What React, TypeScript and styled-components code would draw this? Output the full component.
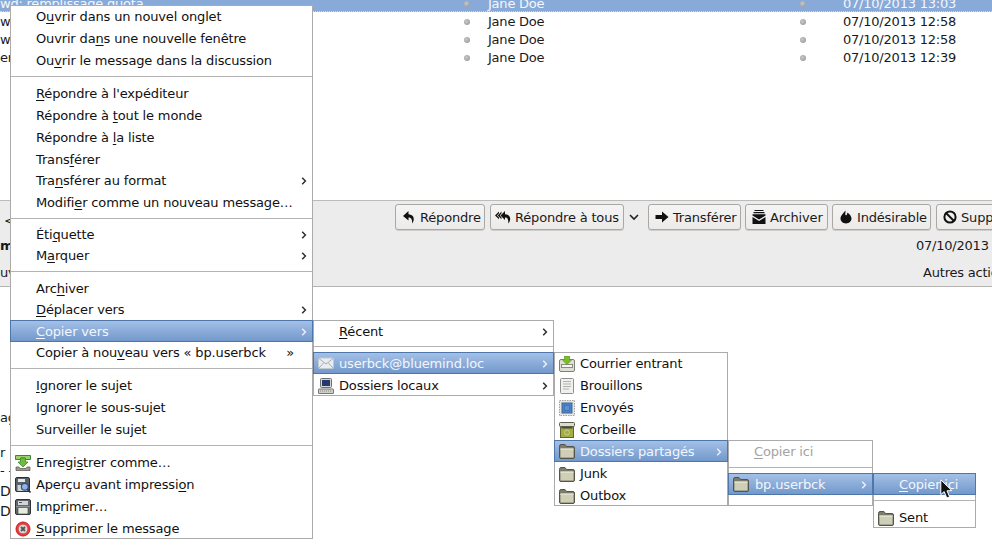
import React from "react";
import styled, { createGlobalStyle, css } from "styled-components";

const Global = createGlobalStyle`
  html, body { margin: 0; padding: 0; background: #fff; }
  body { font-family: "DejaVu Sans", sans-serif; font-size: 13px; color: #1a1a1a; letter-spacing: -0.22px; }
`;

const Page = styled.div`
  position: relative;
  width: 992px;
  height: 547px;
  overflow: hidden;
  background: #fff;
`;

const List = styled.div`
  margin-top: -6px;
  height: 206px;
  display: flex;
  flex-direction: column;
`;

const ListRow = styled.div<{ $selected?: boolean }>`
  box-sizing: border-box;
  height: 18px;
  padding-top: 2px;
  display: grid;
  grid-template-columns: 464px 6px 18px 312px 6px 37px 1fr;
  align-items: center;
  line-height: 16px;
  white-space: nowrap;
  ${(p) =>
    p.$selected
      ? css`
          background: #88aad9;
          color: #f4f7fc;
          border-bottom: 1px dotted #e8d88a;
        `
      : ""}
`;

const Dot = styled.span`
  width: 6px;
  height: 6px;
  border-radius: 50%;
  background: radial-gradient(circle at 40% 40%, #c9c9c9, #8f8f8f);
`;

const Header = styled.div`
  height: 85px;
  background: #edecec;
  border-top: 1px solid #bcbbb9;
  border-bottom: 1px solid #b5b4b2;
  overflow: hidden;
`;

const Toolbar = styled.div`
  display: flex;
  align-items: center;
  height: 26px;
  margin-top: 3px;
  padding-left: 3px;
`;

const Back = styled.span`
  box-sizing: border-box;
  flex: none;
  align-self: flex-start;
  width: 392px;
  padding-left: 1px;
  line-height: 34px;
`;

const ToolButton = styled.button<{ $w: number; $ml?: number }>`
  width: ${(p) => p.$w}px;
  margin-left: ${(p) => p.$ml ?? 5}px;
  height: 26px;
  flex: none;
  padding: 0 0 0 6px;
  display: flex;
  align-items: center;
  gap: 4px;
  font: 13px "DejaVu Sans", sans-serif;
  letter-spacing: -0.18px;
  color: #1a1a1a;
  white-space: nowrap;
  overflow: hidden;
  border: 1px solid #a9a8a5;
  border-radius: 3px;
  background: linear-gradient(#f5f4f4, #ecebea);
  box-shadow: 0 1px 0 #cfcecc;
`;

const DropChevron = styled.svg`
  width: 14px;
  height: 26px;
  margin-left: 3px;
  flex: none;
`;

const HeaderLine = styled.div<{ $h: number }>`
  display: flex;
  justify-content: space-between;
  height: ${(p) => p.$h}px;
  align-items: center;
  white-space: nowrap;
`;

const SideText = styled.span<{ $bold?: boolean }>`
  font-weight: ${(p) => (p.$bold ? 700 : 400)};
`;

const DateText = styled.span`
  margin-right: -37px;
`;

const MoreText = styled.span`
  margin-right: -21px;
`;

const Body = styled.div`
  padding-top: 122px;
  width: 11px;
  overflow: hidden;
  display: flex;
  flex-direction: column;
  align-items: flex-start;
`;

const BodyLine = styled.div<{ $h: number; $size?: number }>`
  height: ${(p) => p.$h}px;
  line-height: ${(p) => p.$h}px;
  font-size: ${(p) => p.$size ?? 13}px;
  white-space: nowrap;
`;

const Menu = styled.div<{ $left: number; $top: number; $width: number }>`
  position: absolute;
  left: ${(p) => p.$left}px;
  top: ${(p) => p.$top}px;
  width: ${(p) => p.$width}px;
  box-sizing: border-box;
  background: #fff;
  border: 1px solid #ababab;
  color: #111;
  letter-spacing: -0.15px;
`;

const ItemIcon = styled.svg`
  position: absolute;
  left: 4px;
  top: 3px;
  width: 16px;
  height: 16px;
`;

const Chevron = styled.svg<{ $light?: boolean }>`
  position: absolute;
  right: 5px;
  top: 7px;
  width: 6px;
  height: 8px;
  fill: none;
  stroke: ${(p) => (p.$light ? "#e8effa" : "#2e2e2e")};
  stroke-width: 1.5;
`;

const Item = styled.div<{ $active?: boolean; $disabled?: boolean; $pad?: number; $h?: number }>`
  box-sizing: border-box;
  height: ${(p) => p.$h ?? 22}px;
  position: relative;
  padding-top: 3px;
  padding-left: ${(p) => p.$pad ?? 25}px;
  line-height: 15px;
  white-space: nowrap;
  color: ${(p) => (p.$disabled ? "#a3a3a3" : "#111")};
  u { text-underline-offset: 2px; text-decoration-thickness: 1px; }
  ${(p) =>
    p.$active
      ? css`
          height: 22px;
          margin: -1px -1px ${(p.$h ?? 22) - 21}px;
          padding-top: 4px;
          padding-left: ${(p.$pad ?? 25) + 1}px;
          color: #f2f6fc;
          background: linear-gradient(#a6c2e8, #7096ca);
          box-shadow: inset 0 0 0 1px #4f76ab;
          ${ItemIcon} { left: 5px; }
          ${Chevron} { right: 6px; top: 8px; }
        `
      : ""}
`;

const Quote = styled.span`
  position: absolute;
  right: 18px;
`;

const Separator = styled.div<{ $h?: number; $top?: number }>`
  box-sizing: border-box;
  height: ${(p) => p.$h ?? 11}px;
  padding-top: ${(p) => p.$top ?? 4}px;
  &::before {
    content: "";
    display: block;
    height: 1px;
    background: #b4b4b4;
  }
`;

const Cursor = styled.svg`
  position: absolute;
  left: 940px;
  top: 479px;
  width: 14px;
  height: 21px;
`;

const Arrow = ({ light }: { light?: boolean }) => (
  <Chevron $light={light} viewBox="0 0 6 8">
    <path d="M1.2 0.8 L4.4 4 L1.2 7.2" />
  </Chevron>
);

const Folder = () => (
  <ItemIcon viewBox="0 0 16 16">
    <path d="M0.5 3.5 Q0.5 1.5 2 1.5 H6 L7.5 3.5 H14 Q15.5 3.5 15.5 5 V14 Q15.5 15.5 14 15.5 H2 Q0.5 15.5 0.5 14 Z" fill="#7d7c68" stroke="#55544a" />
    <path d="M1.5 5.5 H14.5 V14.5 H1.5 Z" fill="#cfcfb8" />
    <path d="M1.5 5.5 H14.5 V7 H1.5 Z" fill="#e0e0cf" />
  </ItemIcon>
);

const MailIcon = () => (
  <ItemIcon viewBox="0 0 16 16">
    <rect x="0.5" y="3" width="15" height="10.5" rx="1" fill="#e9edf2" stroke="#c2c8d0" />
    <path d="M1 3.5 L8 9 L15 3.5 M1 13 L6 7.5 M15 13 L10 7.5" fill="none" stroke="#a9aeb6" />
  </ItemIcon>
);

const ComputerIcon = () => (
  <ItemIcon viewBox="0 0 16 16">
    <rect x="2.5" y="0.5" width="11" height="9" rx="1" fill="#d6d6d2" stroke="#6e6e6a" />
    <rect x="4" y="2" width="8" height="6" fill="#24386f" />
    <rect x="0.5" y="11" width="15" height="4.5" rx="0.5" fill="#cfcfcb" stroke="#77776f" />
    <path d="M2 13 H14" stroke="#8b8b85" strokeDasharray="1 1" />
  </ItemIcon>
);

const InboxIcon = () => (
  <ItemIcon viewBox="0 0 16 16">
    <rect x="0.5" y="3.5" width="15" height="12" rx="1.5" fill="#dfdfd6" stroke="#7f7f76" />
    <rect x="2.5" y="8.5" width="11" height="3" fill="#f7f7f2" stroke="#8a8a80" />
    <path d="M5.5 0 H10.5 V3.5 H13 L8 8.5 L3 3.5 H5.5 Z" fill="#7dbb2e" stroke="#5a9618" strokeWidth="0.7" />
  </ItemIcon>
);

const DraftIcon = () => (
  <ItemIcon viewBox="0 0 16 16">
    <rect x="1.5" y="0.5" width="13" height="15" rx="1" fill="#f0f0ee" stroke="#8f8f8b" />
    <path d="M4 3.5 H12 M4 6 H12 M4 8.5 H12 M4 11 H10" stroke="#b1b1ac" />
  </ItemIcon>
);

const SentIcon = () => (
  <ItemIcon viewBox="0 0 16 16">
    <rect x="0.5" y="0.5" width="15" height="15" fill="#e6e6e2" stroke="#a3a39c" strokeDasharray="1.5 1" />
    <rect x="3" y="3" width="10" height="10" fill="#4d82c6" stroke="#3a669f" />
    <rect x="5.5" y="5.5" width="5" height="5" fill="#5f90cf" stroke="#4674b0" />
  </ItemIcon>
);

const TrashIcon = () => (
  <ItemIcon viewBox="0 0 16 16">
    <rect x="1.5" y="4" width="13" height="11.5" fill="#a3ad46" stroke="#60642f" />
    <rect x="0.5" y="0.5" width="15" height="4" rx="1" fill="#dcdccf" stroke="#5c5c50" />
    <rect x="2.5" y="5" width="11" height="1.5" fill="#4b4b40" />
    <circle cx="8" cy="10.5" r="2.5" fill="none" stroke="#c8d083" />
  </ItemIcon>
);

const SaveIcon = () => (
  <ItemIcon viewBox="0 0 16 16">
    <path d="M0.5 0.5 H15.5 V4.5 H10 V3 H6 V4.5 H0.5 Z" fill="#9ed06c" stroke="#2f8a3a" />
    <path d="M5.5 3 H10.5 V7 H13 L8 12 L3 7 H5.5 Z" fill="#6fbb3a" stroke="#3d8a2e" strokeWidth="0.8" />
    <path d="M1 12 H4 L5 13.5 H11 L12 12 H15 V15.5 H1 Z" fill="#9a9a90" stroke="#55554c" strokeWidth="0.7" />
  </ItemIcon>
);

const PreviewIcon = () => (
  <ItemIcon viewBox="0 0 16 16">
    <rect x="0.5" y="0.5" width="14" height="14" rx="1.5" fill="#5a6168" stroke="#2c3136" />
    <rect x="3" y="2" width="7" height="3" fill="#e5e6e8" />
    <rect x="2.5" y="8" width="10" height="6" fill="#cfd3d6" />
    <circle cx="9.8" cy="9.8" r="3.4" fill="#8fb5e0" stroke="#2d4f86" strokeWidth="1.2" />
    <path d="M12.5 12.5 L15.5 15.5" stroke="#2c3136" strokeWidth="1.6" />
  </ItemIcon>
);

const PrintIcon = () => (
  <ItemIcon viewBox="0 0 16 16">
    <rect x="0.5" y="0.5" width="15" height="15" rx="1.5" fill="#62676c" stroke="#2f3337" />
    <rect x="3" y="2" width="10" height="4" fill="#d2d4d6" />
    <rect x="4" y="3" width="3" height="1" fill="#555" />
    <rect x="3" y="8.5" width="10" height="6.5" fill="#e7ecdc" stroke="#4a4e50" strokeWidth="0.7" />
    <rect x="1" y="7" width="14" height="1.2" fill="#8d9296" />
  </ItemIcon>
);

const DeleteIcon = () => (
  <ItemIcon viewBox="0 0 16 16">
    <circle cx="8" cy="8" r="7" fill="#ef3b3b" stroke="#c92020" />
    <circle cx="8" cy="8" r="4.8" fill="#d9d9d9" stroke="#b22" strokeWidth="0.5" />
    <path d="M6 6 L10 10 M10 6 L6 10" stroke="#555" strokeWidth="1.8" />
  </ItemIcon>
);

const ToolSvg = styled.svg`
  width: 14px;
  height: 14px;
  flex: none;
  fill: #111;
`;

const WideToolSvg = styled(ToolSvg)`
  width: 17px;
  margin: 0 -1px 0 -2px;
`;

const OutlineToolSvg = styled(ToolSvg)`
  fill: none;
  stroke: #111;
  stroke-width: 2;
`;

const ReplyGlyph = () => (
  <ToolSvg viewBox="0 0 14 14">
    <path d="M6.5 1 L1 6 L6.5 10.5 V7.6 C9 7.6 10.2 8.8 10.2 13.5 C12.5 10.5 13 4.6 6.5 4.2 Z" />
  </ToolSvg>
);

const ReplyAllGlyph = () => (
  <WideToolSvg viewBox="0 0 17 14">
    <path d="M4 1.5 L0 5.5 L4 9.2 V7.6 L2 5.5 L4 3.2 Z" />
    <path d="M6.5 1.5 L2.8 5.5 L6.5 9.2 V7.6 L4.8 5.5 L6.5 3.2 Z" />
    <path d="M10 1 L5.5 5.5 L10 10 V7.6 C12.5 7.6 13.4 9.2 13.4 13.5 C16 10.5 16.5 4.6 10 4.2 Z" />
  </WideToolSvg>
);

const ForwardGlyph = () => (
  <ToolSvg viewBox="0 0 14 14">
    <path d="M0.5 5 H7 V1.5 L13.5 7 L7 12.5 V9 H0.5 Z" />
  </ToolSvg>
);

const ArchiveGlyph = () => (
  <ToolSvg viewBox="0 0 14 14">
    <path d="M2.5 0 H11.5 V1 H2.5 Z M1.5 2 H12.5 V3.2 H1.5 Z M0.5 4.2 H13.5 V5.6 L7 9.5 L0.5 5.6 Z M0.5 7 L7 11 L13.5 7 V14 H0.5 Z" />
  </ToolSvg>
);

const FlameGlyph = () => (
  <ToolSvg viewBox="0 0 14 14">
    <path d="M6.5 0.5 C6.8 3 5.8 3.8 6.5 5 C7.3 5.8 8.5 5 8.2 2.5 C10.8 4 12.5 6.4 12.5 8.6 C12.5 11.6 10 13.5 7 13.5 C4 13.5 1.5 11.6 1.5 8.6 C1.5 5.5 4.4 3.5 6.5 0.5 Z" />
  </ToolSvg>
);

const BlockGlyph = () => (
  <OutlineToolSvg viewBox="0 0 14 14">
    <circle cx="7" cy="7" r="5.6" />
    <path d="M3 3 L11 11" />
  </OutlineToolSvg>
);

export default function App() {
  return (
    <Page>
      <Global />
      <List>
        <ListRow $selected>
          <span>wd: remplissage quota</span>
          <Dot />
          <span />
          <span>Jane Doe</span>
          <Dot />
          <span />
          <span>07/10/2013 13:03</span>
        </ListRow>
        <ListRow>
          <span>wd: remplissage quota</span>
          <Dot />
          <span />
          <span>Jane Doe</span>
          <Dot />
          <span />
          <span>07/10/2013 12:58</span>
        </ListRow>
        <ListRow>
          <span>wd: remplissage quota</span>
          <Dot />
          <span />
          <span>Jane Doe</span>
          <Dot />
          <span />
          <span>07/10/2013 12:58</span>
        </ListRow>
        <ListRow>
          <span>er</span>
          <Dot />
          <span />
          <span>Jane Doe</span>
          <Dot />
          <span />
          <span>07/10/2013 12:39</span>
        </ListRow>
      </List>

      <Header>
        <Toolbar>
          <Back>&lt;</Back>
          <ToolButton $w={90} $ml={0}>
            <ReplyGlyph />
            Répondre
          </ToolButton>
          <ToolButton $w={134}>
            <ReplyAllGlyph />
            Répondre à tous
          </ToolButton>
          <DropChevron viewBox="0 0 14 26">
            <path d="M3 11 L7 15 L11 11" fill="none" stroke="#222" strokeWidth="1.6" />
          </DropChevron>
          <ToolButton $w={93} $ml={7}>
            <ForwardGlyph />
            Transférer
          </ToolButton>
          <ToolButton $w={83} $ml={4}>
            <ArchiveGlyph />
            Archiver
          </ToolButton>
          <ToolButton $w={99} $ml={4}>
            <FlameGlyph />
            Indésirable
          </ToolButton>
          <ToolButton $w={100} $ml={5}>
            <BlockGlyph />
            Supprimer
          </ToolButton>
        </Toolbar>
        <HeaderLine $h={30}>
          <SideText $bold>m</SideText>
          <DateText>07/10/2013 13:03</DateText>
        </HeaderLine>
        <HeaderLine $h={24}>
          <SideText>uv</SideText>
          <MoreText>Autres actions</MoreText>
        </HeaderLine>
      </Header>

      <Body>
        <BodyLine $h={18}>ag</BodyLine>
        <BodyLine $h={17} />
        <BodyLine $h={17}>r</BodyLine>
        <BodyLine $h={20}>- -</BodyLine>
        <BodyLine $h={20} $size={14}>D</BodyLine>
        <BodyLine $h={20} $size={14}>D</BodyLine>
      </Body>

      <Menu $left={10} $top={5} $width={303}>
        <Item>O<u>u</u>vrir dans un nouvel onglet</Item>
        <Item>Ouvrir da<u>n</u>s une nouvelle fenêtre</Item>
        <Item>Ou<u>v</u>rir le message dans la discussion</Item>
        <Separator />
        <Item><u>R</u>épondre à l'expéditeur</Item>
        <Item>Répondre à <u>t</u>out le monde</Item>
        <Item>Répondre à <u>l</u>a liste</Item>
        <Item $h={21}>Trans<u>f</u>érer</Item>
        <Item>Tra<u>n</u>sférer au format<Arrow /></Item>
        <Item>Modifi<u>e</u>r comme un nouveau message…</Item>
        <Separator $h={10} />
        <Item $h={21}>Éti<u>q</u>uette<Arrow /></Item>
        <Item>M<u>a</u>rquer<Arrow /></Item>
        <Separator />
        <Item $h={21}>Arc<u>h</u>iver</Item>
        <Item><u>D</u>éplacer vers<Arrow /></Item>
        <Item $active $h={21}><u>C</u>opier vers<Arrow light /></Item>
        <Item>Copier à nou<u>v</u>eau vers « bp.userbck<Quote>»</Quote></Item>
        <Separator />
        <Item><u>I</u>gnorer le sujet</Item>
        <Item>Ignorer le sous-sujet</Item>
        <Item>Surveiller le sujet</Item>
        <Separator />
        <Item><SaveIcon />Enregi<u>s</u>trer comme…</Item>
        <Item><PreviewIcon />Aperçu avant impressi<u>o</u>n</Item>
        <Item><PrintIcon />Im<u>p</u>rimer…</Item>
        <Item $h={20}><DeleteIcon /><u>S</u>upprimer le message</Item>
      </Menu>

      <Menu $left={313} $top={320} $width={241}>
        <Item><u>R</u>écent<Arrow /></Item>
        <Separator $h={10} $top={3} />
        <Item $active><MailIcon />userbck@bluemind.loc<Arrow light /></Item>
        <Item $h={20}><ComputerIcon />Dossiers locaux<Arrow /></Item>
      </Menu>

      <Menu $left={554} $top={352} $width={174}>
        <Item><InboxIcon />Courrier entrant</Item>
        <Item><DraftIcon />Brouillons</Item>
        <Item><SentIcon />Envoyés</Item>
        <Item><TrashIcon />Corbeille</Item>
        <Item $active><Folder />Dossiers partagés<Arrow light /></Item>
        <Item><Folder />Junk</Item>
        <Item $h={20}><Folder />Outbox</Item>
      </Menu>

      <Menu $left={728} $top={440} $width={145}>
        <Item $disabled><u>C</u>opier ici</Item>
        <Separator />
        <Item $active $pad={26}><Folder />bp.userbck<Arrow light /></Item>
        <Item $h={9} />
      </Menu>

      <Menu $left={873} $top={473} $width={103}>
        <Item $active><u>C</u>opier ici</Item>
        <Separator />
        <Item $h={20}><Folder />Sent</Item>
      </Menu>

      <Cursor viewBox="0 0 14 21">
        <path d="M0.8 0.8 L0.8 15.5 L4.2 12.6 L6.8 19 L9.6 17.8 L7 11.8 L11.8 11.6 Z" fill="#111" stroke="#fff" strokeWidth="1" />
      </Cursor>
    </Page>
  );
}
